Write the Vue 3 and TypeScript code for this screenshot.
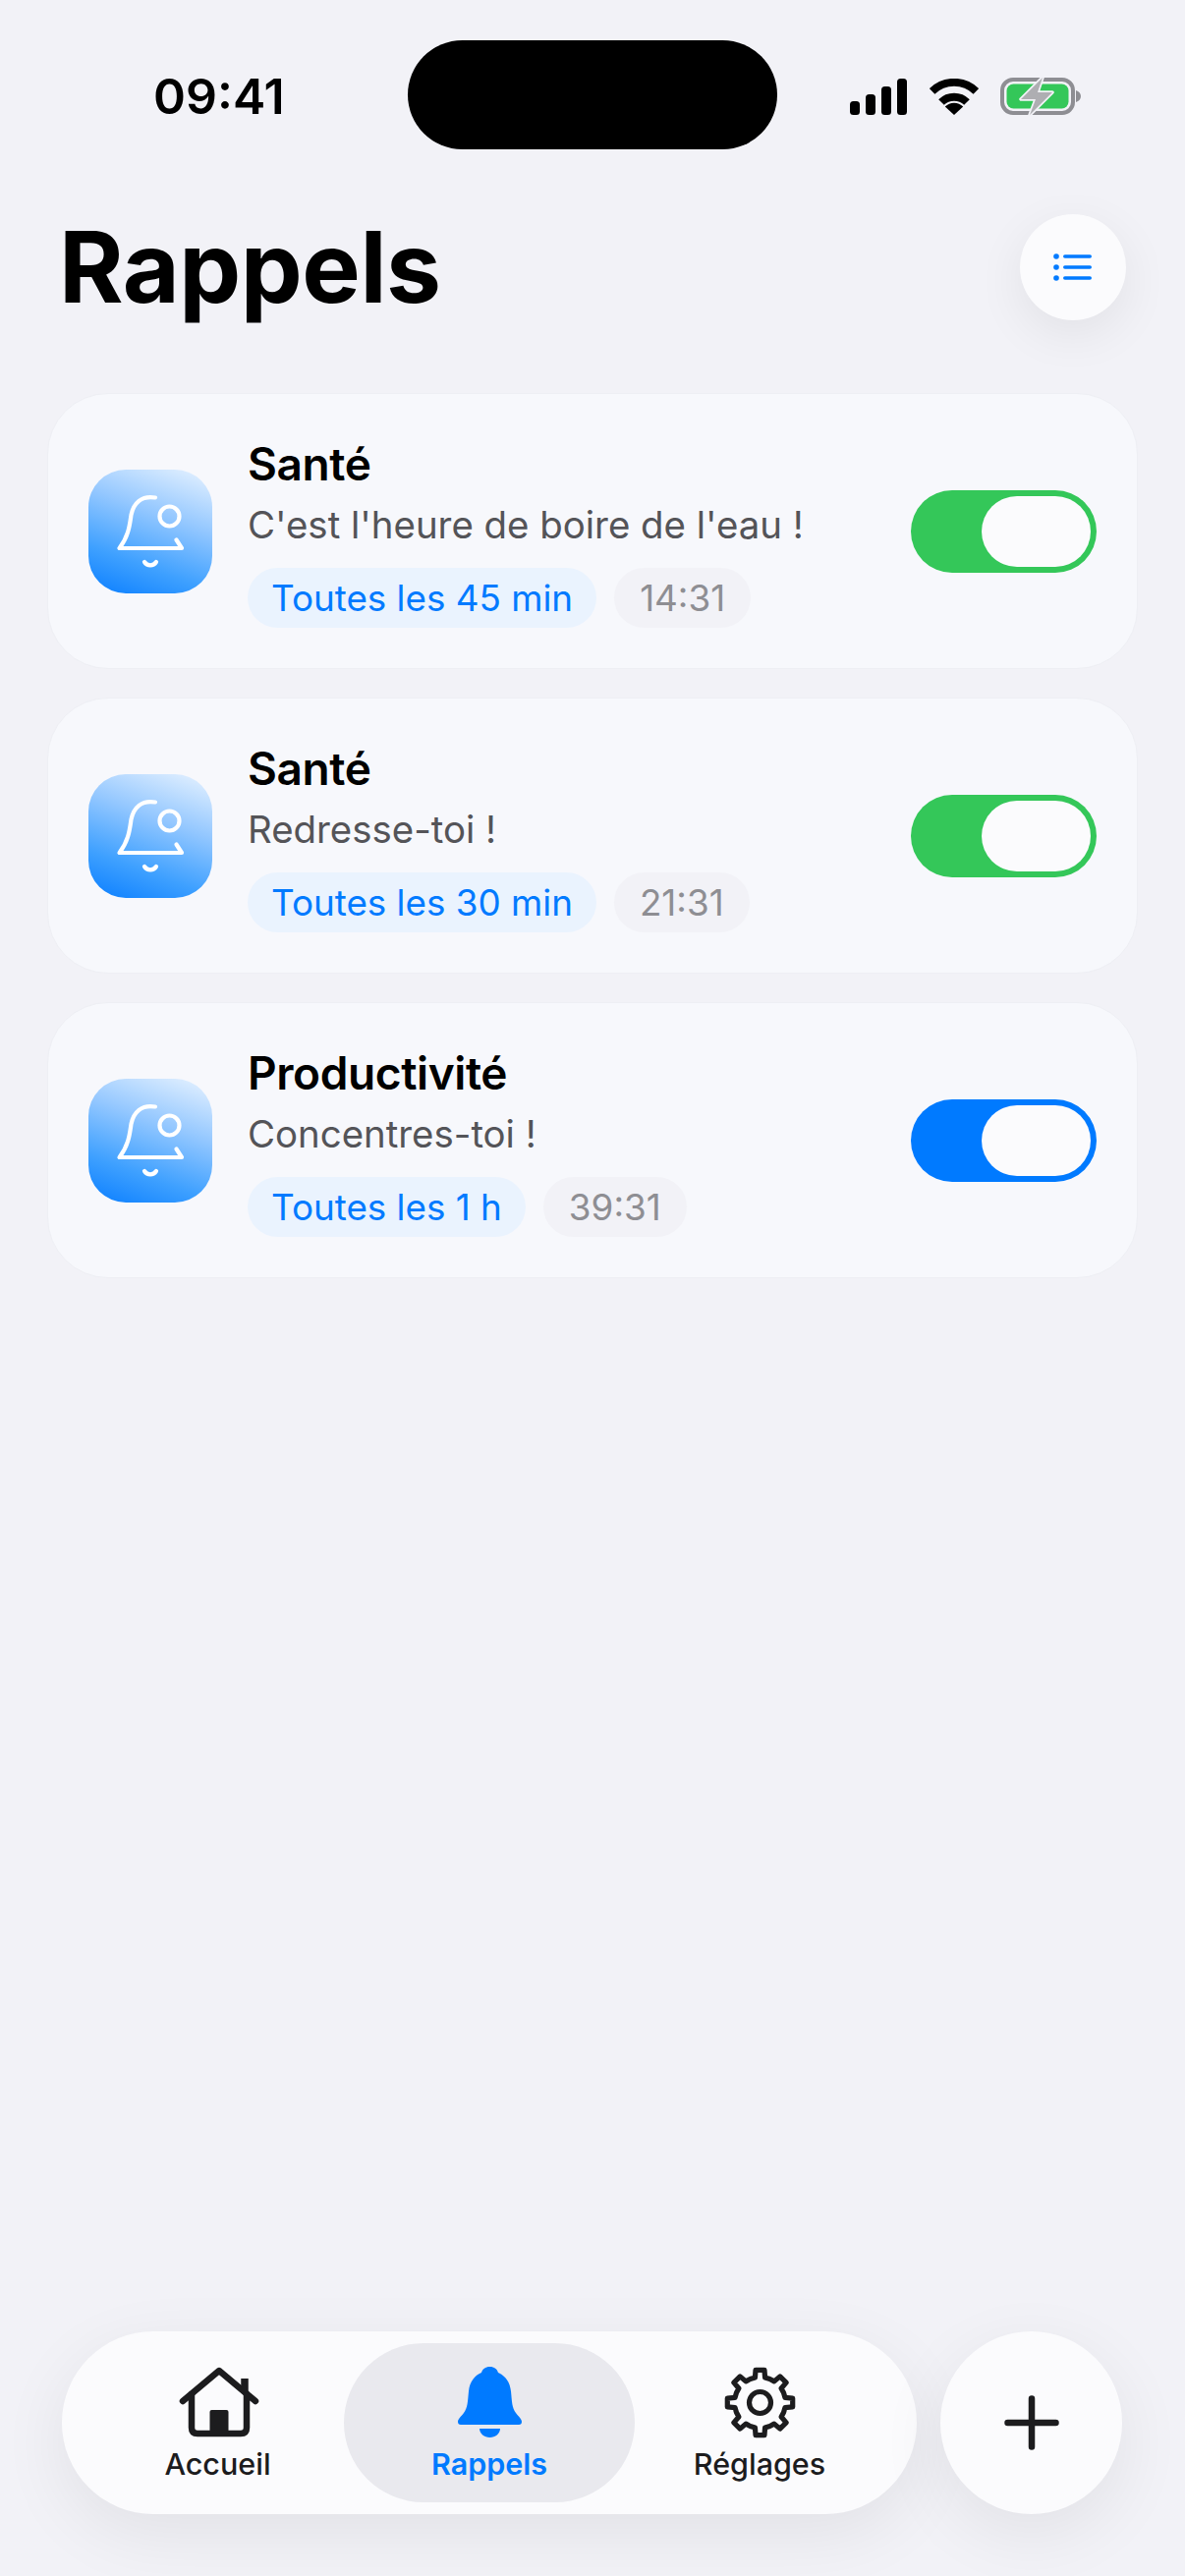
<script setup lang="ts">
  // rappels list and the bottom tabs
  interface Reminder {
    title: string;
    message: string;
    every: string;
    left: string;
    tone: 'green' | 'blue';
  }

  const reminders: Reminder[] = [
    { title: 'Santé', message: "C'est l'heure de boire de l'eau !", every: 'Toutes les 45 min', left: '14:31', tone: 'green' },
    { title: 'Santé', message: 'Redresse-toi !', every: 'Toutes les 30 min', left: '21:31', tone: 'green' },
    { title: 'Productivité', message: 'Concentres-toi !', every: 'Toutes les 1 h', left: '39:31', tone: 'blue' },
  ];

  // 8 tooth gear outline, center 36.5/36.5
  function gearPath(): string {
    const pts: string[] = [];
    const teeth = 8;
    for (let i = 0; i < teeth; i++) {
      const mid = (i / teeth) * Math.PI * 2 - Math.PI / 2;
      const step = (Math.PI * 2) / teeth;
      const shape: [number, number][] = [
        [26, -0.5],
        [26, -0.25],
        [33.5, -0.17],
        [33.5, 0.17],
        [26, 0.25],
      ];
      for (const [r, k] of shape) {
        const a = mid + k * step;
        pts.push(`${(36.5 + r * Math.cos(a)).toFixed(2)} ${(36.5 + r * Math.sin(a)).toFixed(2)}`);
      }
    }
    return 'M' + pts.join('L') + 'Z';
  }
  const gear = gearPath();
</script>

<template>
  <div class="page">
    <!-- status bar -->
    <div class="status">
      <div class="status-time">09:41</div>
      <div class="island"></div>
      <div class="status-icons">
        <svg class="signal" width="58" height="37" viewBox="0 0 58 37">
          <rect x="0" y="23" width="10" height="14" rx="3.5" />
          <rect x="16" y="16" width="10" height="21" rx="3.5" />
          <rect x="32" y="8" width="10" height="29" rx="3.5" />
          <rect x="48" y="0" width="10" height="37" rx="3.5" />
        </svg>
        <svg class="wifi" width="50" height="37" viewBox="0 0 50 37">
          <path d="M2.6 13 A32 32 0 0 1 47.4 13" />
          <path d="M12 24 A18.5 18.5 0 0 1 38 24" />
          <path class="wifi-dot" d="M25 37 L15.8 28.5 A13 13 0 0 1 34.2 28.5Z" />
        </svg>
        <svg class="battery" width="82" height="40" viewBox="0 0 82 40">
          <rect x="2" y="3" width="72" height="34" rx="11" fill="none" stroke="#8e8e93" stroke-width="4" />
          <rect x="6.5" y="7.5" width="63" height="25" rx="7" fill="#34c759" />
          <path d="M77 14 C80 15 82 17 82 20 C82 23 80 25 77 26Z" fill="#8e8e93" />
          <path d="M43 1 L21 23 H36 L30 39 L53 16 H38Z" fill="#aeaeb2" stroke="#f2f2f7" stroke-width="3.5" stroke-linejoin="round" paint-order="stroke" />
        </svg>
      </div>
    </div>

    <!-- header -->
    <div class="header">
      <h1 class="title">Rappels</h1>
      <button class="list-btn">
        <svg width="40" height="28" viewBox="0 0 40 28">
          <circle cx="3" cy="3" r="2.8" />
          <circle cx="3" cy="14" r="2.8" />
          <circle cx="3" cy="25" r="2.8" />
          <rect x="10" y="1.2" width="29" height="3.6" rx="1.8" />
          <rect x="10" y="12.2" width="29" height="3.6" rx="1.8" />
          <rect x="10" y="23.2" width="29" height="3.6" rx="1.8" />
        </svg>
      </button>
    </div>

    <!-- rappels -->
    <div class="cards">
      <div v-for="(item, i) in reminders" :key="i" class="card">
        <div class="app-icon">
          <svg width="126" height="126" viewBox="0 0 126 126" fill="none" stroke="#fff" stroke-width="4.2" stroke-linecap="round" stroke-linejoin="round">
            <path d="M68 28.5 C54 26 46 34 43.5 46 C42 56 41 68 31.5 80 H95 L89.5 71.5" />
            <circle cx="82.5" cy="47.5" r="10" />
            <path d="M57 94 C60 98.5 66 98.5 69 94" />
          </svg>
        </div>
        <div class="card-text">
          <div class="card-title">{{ item.title }}</div>
          <div class="card-message">{{ item.message }}</div>
          <div class="chips">
            <span class="chip chip-blue">{{ item.every }}</span>
            <span class="chip chip-grey">{{ item.left }}</span>
          </div>
        </div>
        <div class="toggle" :class="item.tone">
          <div class="thumb"></div>
        </div>
      </div>
    </div>

    <!-- bottom tabs -->
    <div class="bottom">
      <nav class="tabs">
        <div class="tab">
          <div class="tab-icon">
            <svg class="house" width="82" height="72" viewBox="0 0 82 72" fill="none" stroke="#1c1c1e" stroke-width="6.5" stroke-linecap="round" stroke-linejoin="round">
              <path d="M4 35 L41 4 L78 35" />
              <path d="M13 28 V62 Q13 68 19 68 H63 Q69 68 69 62 V28" />
              <path d="M67 12 V26" stroke-linecap="butt" stroke-width="7.5" />
              <rect x="31.5" y="44" width="19" height="24" rx="2" fill="#1c1c1e" stroke="none" />
            </svg>
          </div>
          <span class="tab-label">Accueil</span>
        </div>
        <div class="tab active">
          <div class="tab-icon">
            <svg width="65" height="72" viewBox="0 0 65 72" fill="#007aff">
              <path d="M32.5 0 C37 0 40 2.5 41 6 C48 9 53 15 54 25 C55 35 55 42 59 47 C62 51 65 53 65 56 C65 58 64 59 62 59 H3 C1 59 0 58 0 56 C0 53 3 51 6 47 C10 42 10 35 11 25 C12 15 17 9 24 6 C25 2.5 28 0 32.5 0Z" />
              <path d="M22 63 H43 C43 68 38 72 32.5 72 C27 72 22 68 22 63Z" />
            </svg>
          </div>
          <span class="tab-label">Rappels</span>
        </div>
        <div class="tab">
          <div class="tab-icon">
            <svg width="73" height="73" viewBox="0 0 73 73" fill="none" stroke="#1c1c1e" stroke-width="5.2" stroke-linejoin="round">
              <path :d="gear" />
              <circle cx="36.5" cy="36.5" r="11" />
            </svg>
          </div>
          <span class="tab-label">Réglages</span>
        </div>
      </nav>
      <button class="add-btn">
        <svg width="56" height="56" viewBox="0 0 56 56" stroke="#1c1c1e" stroke-width="6.5" stroke-linecap="round">
          <path d="M28 3.5 V52.5 M3.5 28 H52.5" />
        </svg>
      </button>
    </div>
  </div>
</template>

<style>
html, body {
  background: #f2f2f7;
}
</style>

<style scoped>
.page {
  display: flex;
  flex-direction: column;
  width: 1206px;
  height: 2622px;
  overflow: hidden;
  background: #f2f2f7;
  font-family: Inter, "Liberation Sans", sans-serif;
  color: #000;
}

.status {
  display: flex;
  align-items: center;
  height: 111px;
  margin-top: 41px;
}

.status-time {
  width: 415px;
  padding-left: 156px;
  box-sizing: border-box;
  font-size: 50px;
  font-weight: 600;
  line-height: 1;
  margin-top: 3px;
}

.island {
  width: 376px;
  height: 111px;
  border-radius: 56px;
  background: #000;
}

.status-icons {
  display: flex;
  align-items: center;
  margin-left: 74px;
  margin-top: 3px;
}

.signal {
  fill: #000;
}

.wifi {
  margin-left: 23px;
  fill: none;
  stroke: #000;
  stroke-width: 8;
}

.wifi-dot {
  fill: #000;
  stroke: none;
}

.battery {
  margin-left: 22px;
}

.header {
  display: flex;
  align-items: center;
  justify-content: space-between;
  height: 108px;
  margin-top: 66px;
  padding: 0 60px 0 60px;
}

.title {
  margin: 0;
  font-size: 100px;
  font-weight: 700;
  line-height: 104px;
  letter-spacing: -0.5px;
}

.list-btn {
  display: flex;
  align-items: center;
  justify-content: center;
  width: 108px;
  height: 108px;
  padding: 0;
  border: none;
  border-radius: 50%;
  background: #fbfbfd;
  fill: #007aff;
  box-shadow: 0 14px 50px rgba(0, 0, 0, 0.07);
}

.cards {
  flex: 1;
  display: flex;
  flex-direction: column;
  gap: 29px;
  margin-top: 74px;
  padding: 0 48px;
}

.card {
  display: flex;
  align-items: center;
  box-sizing: border-box;
  height: 281px;
  padding: 0 41px;
  border: 1px solid #eeeff4;
  border-radius: 62px;
  background: #f7f8fc;
}

.app-icon {
  flex: none;
  width: 126px;
  height: 126px;
  border-radius: 38px;
  background: linear-gradient(20deg, #0a7eff 0%, #3ea0ff 28%, #93c7ff 62%, #e8f3ff 100%);
}

.app-icon svg {
  display: block;
}

.card-text {
  flex: 1;
  margin-left: 36px;
}

.card-title {
  font-size: 46px;
  font-weight: 600;
  line-height: 58px;
  letter-spacing: -0.4px;
}

.card-message {
  font-size: 38.4px;
  line-height: 60px;
  margin-top: 3px;
  color: #545458;
}

.chips {
  display: flex;
  gap: 18px;
  margin-top: 14px;
}

.chip {
  height: 61px;
  padding: 0 24px;
  border-radius: 31px;
  font-size: 36.8px;
  line-height: 61px;
}

.chip-blue {
  background: #eaf3fe;
  color: #007aff;
}

.chip-grey {
  padding: 0 26px;
  background: #f2f2f7;
  color: #8e8e93;
}

.toggle {
  flex: none;
  display: flex;
  justify-content: flex-end;
  box-sizing: border-box;
  width: 189px;
  height: 84px;
  padding: 6px;
  border-radius: 42px;
}

.toggle.green {
  background: #34c759;
}

.toggle.blue {
  background: #007aff;
}

.thumb {
  width: 111px;
  height: 72px;
  border-radius: 36px;
  background: #fbfbfd;
}

.bottom {
  display: flex;
  gap: 24px;
  padding: 0 64px 63px 63px;
}

.tabs {
  display: grid;
  grid-template-columns: 257px 296px 254px;
  box-sizing: border-box;
  width: 870px;
  height: 186px;
  padding: 12px 33px 12px 30px;
  border-radius: 93px;
  background: #fbfbfd;
  box-shadow: 0 20px 70px rgba(0, 0, 0, 0.07);
}

.tab {
  display: flex;
  flex-direction: column;
  align-items: center;
  padding-top: 24px;
  border-radius: 81px;
  color: #1c1c1e;
}

.tab.active {
  background: #e9e9ee;
  color: #007aff;
}

.tab.active .tab-label {
  font-weight: 600;
}

.tab-icon {
  display: flex;
  align-items: center;
  justify-content: center;
  height: 72px;
}

.tab-icon svg {
  display: block;
}

.house {
  margin-left: 2px;
}

.tab-label {
  margin-top: 9px;
  font-size: 30.5px;
  font-weight: 500;
  line-height: 36px;
}

.add-btn {
  display: flex;
  align-items: center;
  justify-content: center;
  width: 186px;
  height: 186px;
  padding: 0;
  border: none;
  border-radius: 50%;
  background: #fbfbfd;
  box-shadow: 0 20px 70px rgba(0, 0, 0, 0.07);
}
</style>
